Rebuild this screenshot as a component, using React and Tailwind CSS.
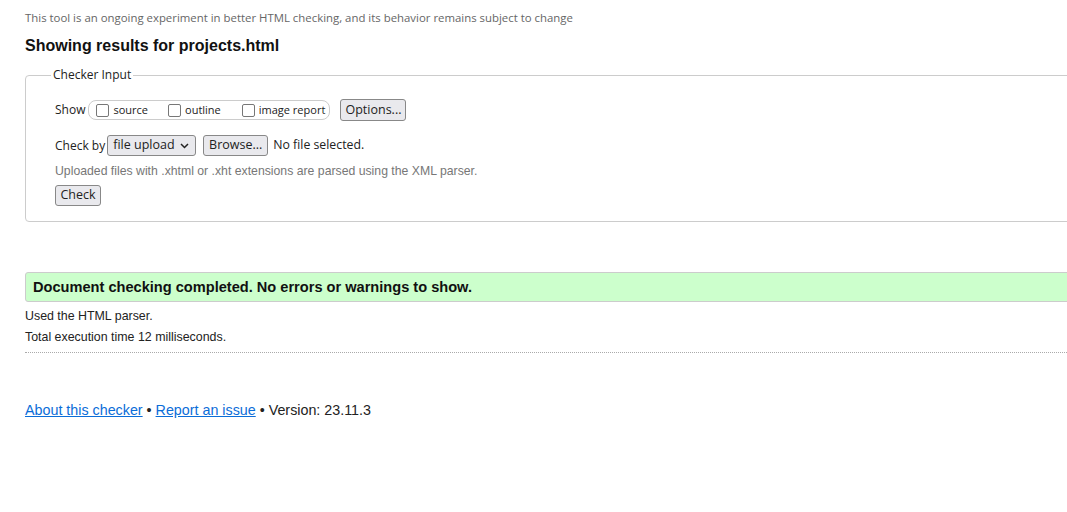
export default function App() {
  return (
    <div className="w-[1067px] h-[512px] overflow-hidden bg-white font-['Liberation_Sans',Arial,sans-serif] text-[#222]">
      <div className="ml-[25px] w-[1100px]">
        <p className="pt-[10px] text-[11.4px] leading-[16px] text-[#666] font-['Open_Sans',sans-serif]">
          This tool is an ongoing experiment in better HTML checking, and its behavior remains subject to change
        </p>
        <h2 className="mt-[10px] text-[16px] leading-[20px] font-bold text-[#111]">
          Showing results for projects.html
        </h2>

        <fieldset className="mt-[12px] border border-[#ccc] rounded-[4px] pl-[29px] pr-4 pb-[15px] pt-[17px]">
          <legend className="-ml-[4px] px-[2px] text-[12px] leading-[14px] font-['Open_Sans',sans-serif] text-[#222]">
            Checker Input
          </legend>

          <div className="flex items-center font-['Open_Sans',sans-serif] text-[12px]">
            <span>Show</span>
            <div className="ml-[3px] h-[20px] w-[242px] flex items-center border border-[#ccc] rounded-[8px] pl-[7px] text-[11px]">
              <label className="flex items-center">
                <span className="w-[13px] h-[13px] border border-[#777] rounded-[2px] mr-[4px]"></span>
                source
              </label>
              <label className="flex items-center ml-[20px]">
                <span className="w-[13px] h-[13px] border border-[#777] rounded-[2px] mr-[4px]"></span>
                outline
              </label>
              <label className="flex items-center ml-[21px]">
                <span className="w-[13px] h-[13px] border border-[#777] rounded-[2px] mr-[4px]"></span>
                image report
              </label>
            </div>
            <button className="ml-[10px] h-[22px] w-[66px] text-[12.5px] border border-[#888] rounded-[3px] bg-[#e9e9ed]">
              Options...
            </button>
          </div>

          <div className="mt-[14px] flex items-center font-['Open_Sans',sans-serif] text-[12px]">
            <span>Check by</span>
            <div className="ml-[2px] h-[21px] w-[89px] flex items-center justify-between border border-[#888] rounded-[3px] bg-[#e9e9ed] pl-[5px] pr-[6px] text-[12.5px]">
              <span>file upload</span>
              <svg width="9" height="6" viewBox="0 0 9 6">
                <path d="M1 1l3.5 3.5L8 1" fill="none" stroke="#222" strokeWidth="1.5" />
              </svg>
            </div>
            <button className="ml-[7px] h-[21px] w-[65px] text-[12.5px] border border-[#888] rounded-[3px] bg-[#e9e9ed]">
              Browse...
            </button>
            <span className="ml-[5px] text-[12.3px]">No file selected.</span>
          </div>

          <p className="mt-[7px] text-[12.25px] leading-[16px] text-[#777]">
            Uploaded files with .xhtml or .xht extensions are parsed using the XML parser.
          </p>

          <button className="mt-[6px] h-[21px] w-[46px] text-[12.5px] border border-[#888] rounded-[3px] bg-[#e9e9ed] font-['Open_Sans',sans-serif]">
            Check
          </button>
        </fieldset>

        <div className="mt-[50px] h-[30px] flex items-center border border-[#ccc] rounded-[3px] bg-[#ccffcc] pl-[7px] pt-[2px] text-[14.6px] font-bold text-[#111]">
          Document checking completed. No errors or warnings to show.
        </div>

        <p className="mt-[6px] text-[12.4px] leading-[16px]">Used the HTML parser.</p>
        <p className="mt-[5px] text-[12.4px] leading-[16px]">Total execution time 12 milliseconds.</p>
        <div className="mt-[7px] border-t border-dotted border-[#aaa]"></div>

        <p className="mt-[48px] text-[14.3px] leading-[18px]">
          <a href="#" className="text-[#0b6dd8] underline">About this checker</a>
          {" • "}
          <a href="#" className="text-[#0b6dd8] underline">Report an issue</a>
          {" • Version: 23.11.3"}
        </p>
      </div>
    </div>
  );
}
